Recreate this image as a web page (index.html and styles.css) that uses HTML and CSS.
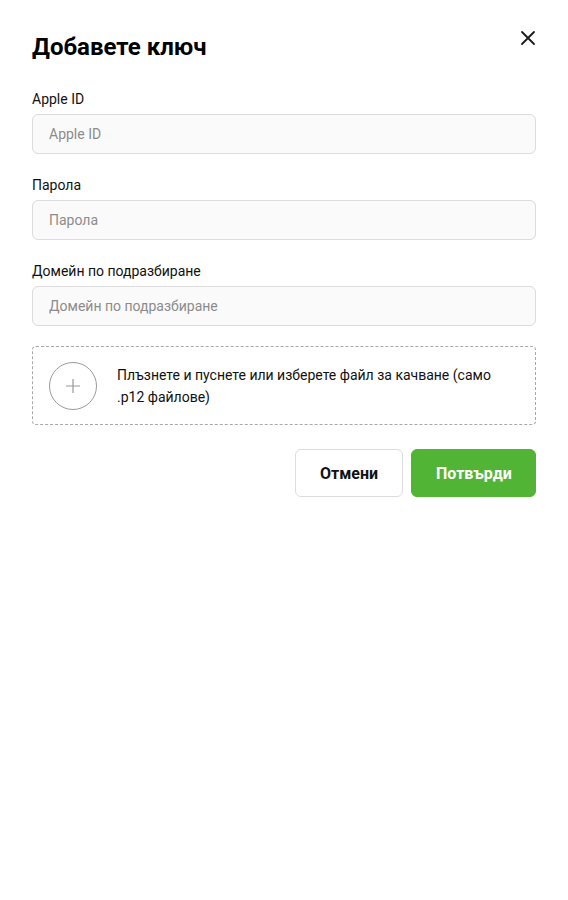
FILE: index.html
```html
<!DOCTYPE html>
<html lang="bg">
<head>
<meta charset="utf-8">
<link rel="stylesheet" href="styles.css">
</head>
<body>
<div class="dialog">
  <div class="header">
    <h1 class="title">Добавете ключ</h1>
    <button class="close" aria-label="Close">
      <svg width="16" height="16" viewBox="0 0 16 16"><path d="M2 2L14 14M14 2L2 14" stroke="#1a1a1a" stroke-width="1.8" stroke-linecap="round"/></svg>
    </button>
  </div>
  <div class="field">
    <label class="label">Apple ID</label>
    <input class="input" placeholder="Apple ID">
  </div>
  <div class="field">
    <label class="label">Парола</label>
    <input class="input" placeholder="Парола">
  </div>
  <div class="field">
    <label class="label">Домейн по подразбиране</label>
    <input class="input" placeholder="Домейн по подразбиране">
  </div>
  <div class="drop">
    <div class="plus">
      <svg width="16" height="16" viewBox="0 0 16 16"><path d="M8 1V15M1 8H15" stroke="#999" stroke-width="1.2"/></svg>
    </div>
    <div class="drop-text">Плъзнете и пуснете или изберете файл за качване (само .p12 файлове)</div>
  </div>
  <div class="actions">
    <button class="btn btn-cancel">Отмени</button>
    <button class="btn btn-ok">Потвърди</button>
  </div>
</div>
</body>
</html>
```
FILE: styles.css
```css
* { box-sizing: border-box; }
body {
  margin: 0;
  background: #fff;
  font-family: Roboto, "Liberation Sans", sans-serif;
  color: #111;
}
.dialog {
  padding: 28px 32px 0 32px;
}
.header {
  display: flex;
  justify-content: space-between;
  align-items: flex-start;
  margin-bottom: 26px;
}
.title {
  margin: 4px 0 0 0;
  font-size: 24px;
  font-weight: 700;
  line-height: 30px;
  color: #000;
}
.close {
  border: none;
  background: none;
  padding: 0;
  margin: 0 -2px 0 0;
  width: 20px;
  height: 20px;
  display: flex;
  align-items: center;
  justify-content: center;
  cursor: pointer;
}
.field {
  display: flex;
  flex-direction: column;
  margin-bottom: 20px;
}
.label {
  font-size: 14px;
  line-height: 22px;
  margin-bottom: 4px;
  color: #111;
}
.input {
  height: 40px;
  border: 1px solid #dcdcdc;
  border-radius: 6px;
  background: #fafafa;
  padding: 0 16px;
  font-family: inherit;
  font-size: 14px;
  color: #111;
  outline: none;
}
.input::placeholder { color: #8c8c8c; }
.drop {
  margin-top: 2px;
  height: 79px;
  border: 1px dashed #a8a8a8;
  border-radius: 4px;
  display: flex;
  align-items: center;
  padding: 0 16px;
  gap: 20px;
}
.plus {
  flex: none;
  width: 48px;
  height: 48px;
  border: 1px solid #9a9a9a;
  border-radius: 50%;
  display: flex;
  align-items: center;
  justify-content: center;
}
.drop-text {
  font-size: 14px;
  line-height: 22px;
  color: #111;
  padding-right: 12px;
}
.actions {
  display: flex;
  justify-content: flex-end;
  gap: 8px;
  margin-top: 24px;
}
.btn {
  height: 48px;
  border-radius: 6px;
  font-family: inherit;
  font-size: 16px;
  font-weight: 700;
  padding: 0 24px;
  cursor: pointer;
}
.btn-cancel {
  width: 108px;
  background: #fff;
  border: 1px solid #dcdcdc;
  color: #111;
}
.btn-ok {
  width: 125px;
  background: #52b435;
  border: 1px solid #52b435;
  color: #fff;
}
```
